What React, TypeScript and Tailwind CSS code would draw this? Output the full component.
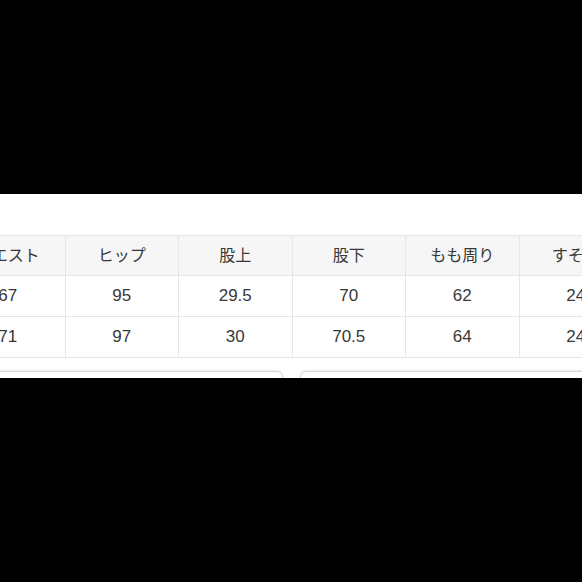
import React from 'react';

const headers = ['ウエスト', 'ヒップ', '股上', '股下', 'もも周り', 'すそ幅'];
const rows = [
    ['67', '95', '29.5', '70', '62', '24'],
    ['71', '97', '30', '70.5', '64', '24'],
];

const font = { fontFamily: '"Liberation Sans", "Noto Sans CJK JP", sans-serif' };

export default function App() {
    return (
        <div className="w-[582px] h-[582px] bg-black flex flex-col overflow-hidden" style={font}>
            <div className="h-[194px] shrink-0" />
            <div className="h-[184px] shrink-0 bg-white overflow-hidden pt-[41px]">
                <div className="-ml-[49px] w-[681px] border-t border-[#e6e6e6] text-[#383838]">
                    <div className="grid grid-cols-6 h-[40px] bg-[#f6f6f6] border-b border-[#e6e6e6]">
                        {headers.map((h, i) => (
                            <div
                                key={h}
                                className={`flex items-center justify-center text-[16px] ${i > 0 ? 'border-l border-[#e6e6e6]' : ''}`}
                            >
                                {h}
                            </div>
                        ))}
                    </div>
                    {rows.map((r, ri) => (
                        <div key={ri} className="grid grid-cols-6 h-[41px] border-b border-[#e6e6e6]">
                            {r.map((v, i) => (
                                <div
                                    key={i}
                                    className={`flex items-center justify-center text-[17px] ${i > 0 ? 'border-l border-[#e6e6e6]' : ''}`}
                                >
                                    {v}
                                </div>
                            ))}
                        </div>
                    ))}
                </div>
                <div className="flex gap-[17px] mt-[13px] -ml-[20px]">
                    <div className="w-[303px] h-[40px] shrink-0 rounded-[6px] border border-[#d6d6d6] shadow-[0_-1px_2px_rgba(0,0,0,0.08)]" />
                    <div className="w-[320px] h-[40px] shrink-0 rounded-[6px] border border-[#d6d6d6] shadow-[0_-1px_2px_rgba(0,0,0,0.08)]" />
                </div>
            </div>
            <div className="flex-1" />
        </div>
    );
}
